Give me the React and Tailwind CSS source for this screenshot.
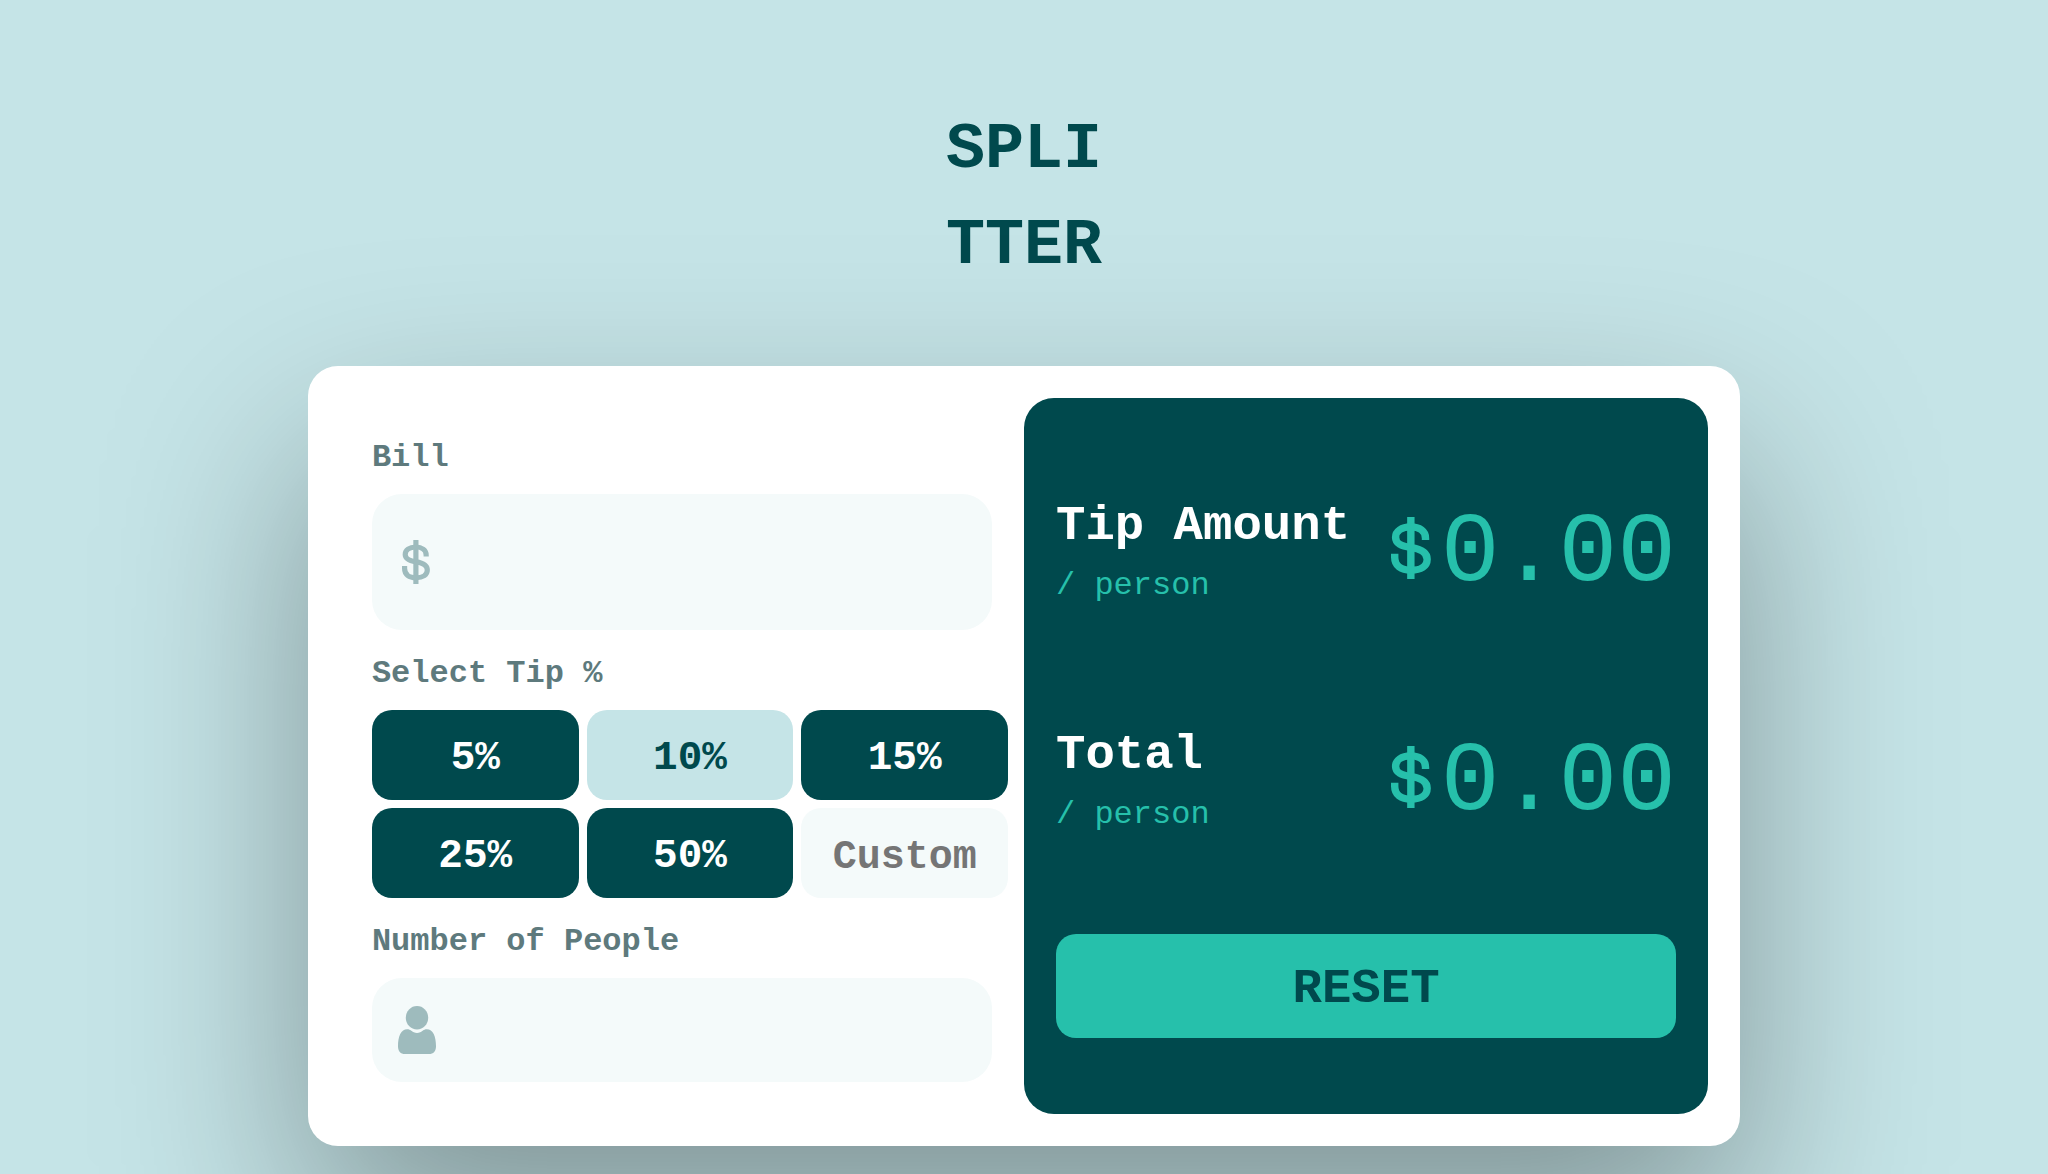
import { useState } from "react";

const TIPS = [5, 10, 15, 25, 50];

function DollarIcon({ className }) {
  return (
    <svg
      viewBox="0 0 27 44"
      preserveAspectRatio="none"
      fill="none"
      stroke="currentColor"
      strokeWidth="5"
      className={className}
      aria-hidden="true"
    >
      <path d="M13.4 0V44" />
      <path d="M23.3 16.4V15C23.3 10 19.3 7 13.2 7C7.2 7 3.1 10 3.1 14.4C3.1 19 6.9 20.7 13.4 21.7C20.4 22.8 24.4 25 24.4 30C24.4 35 20.2 37.8 13.5 37.8C6.8 37.8 2.5 34.8 2.5 28.6V26" />
    </svg>
  );
}

function PersonIcon({ className }) {
  return (
    <svg viewBox="0 0 38 48" fill="currentColor" className={className} aria-hidden="true">
      <ellipse cx="19" cy="11.7" rx="11.2" ry="11.7" />
      <path d="M9.2 23.2C11 23.2 12 23.8 13 24.6C14.8 26.1 16.7 27 19 27C21.3 27 23.2 26.1 25 24.6C26 23.8 27 23.2 28.8 23.2C35 23.2 38 30.5 38 40.2C38 45.2 35.4 48 31 48H7C2.6 48 0 45.2 0 40.2C0 30.5 3 23.2 9.2 23.2Z" />
    </svg>
  );
}

function Result({ title, value }) {
  return (
    <div className="flex h-36 items-center justify-between">
      <div className="pt-4">
        <h2 className="text-[49px] leading-[60px] font-bold text-white">{title}</h2>
        <p className="text-[32px] leading-[60px]">/ person</p>
      </div>
      <div className="flex items-center gap-2.5">
        <DollarIcon className="h-[62px] w-10" />
        <output className="pt-3 text-[98px] leading-[132px]">{value}</output>
      </div>
    </div>
  );
}

const labelClass = "flex h-20 items-center pt-2 text-[32px] leading-10 font-bold text-[#5e7a7d]";
const fieldClass =
  "flex items-center rounded-[30px] bg-[#f4fafa] text-[#9ebbbd] focus-within:ring-4 focus-within:ring-[#26c0ab]";
const inputClass =
  "h-full min-w-0 flex-1 bg-transparent pr-6 text-right text-[49px] font-bold text-[#00494d] outline-none";

export default function App() {
  const [bill, setBill] = useState("");
  const [people, setPeople] = useState("");
  const [custom, setCustom] = useState("");
  const [tip, setTip] = useState(10);

  const rate = (custom === "" ? tip : Number(custom) || 0) / 100;
  const count = Number(people) || 0;
  const amount = Number(bill) || 0;
  const tipEach = count > 0 ? (amount * rate) / count : 0;
  const totalEach = count > 0 ? (amount * (1 + rate)) / count : 0;

  const reset = () => {
    setBill("");
    setPeople("");
    setCustom("");
    setTip(10);
  };

  return (
    <div className="flex min-h-screen flex-col items-center bg-[#c5e4e7] px-px pt-[102px] pb-7 font-['Liberation_Mono',monospace]">
      <h1 className="text-center text-[65px] leading-24 font-bold text-[#00494d]">
        SPLI
        <br />
        TTER
      </h1>
      <main className="mt-18 grid w-[70%] grid-cols-2 rounded-[30px] bg-white p-8 shadow-[0_90px_200px_rgba(0,0,0,0.35)]">
        <form className="py-4 pl-8" onSubmit={(e) => e.preventDefault()}>
          <label htmlFor="bill" className={labelClass}>
            Bill
          </label>
          <div className={`${fieldClass} mr-8 h-[136px]`}>
            <DollarIcon className="mx-[30px] h-11 w-7" />
            <input id="bill" inputMode="decimal" value={bill} onChange={(e) => setBill(e.target.value)} className={inputClass} />
          </div>

          <fieldset>
            <legend className={labelClass}>Select Tip %</legend>
            <div className="mr-4 grid grid-cols-3 gap-2">
              {TIPS.map((t) => (
                <button
                  key={t}
                  type="button"
                  aria-pressed={tip === t}
                  onClick={() => {
                    setTip(t);
                    setCustom("");
                  }}
                  className={`h-[90px] rounded-[20px] pt-2 text-[41px] font-bold ${
                    tip === t ? "bg-[#c5e4e7] text-[#00494d]" : "bg-[#00494d] text-white"
                  }`}
                >
                  {t}%
                </button>
              ))}
              <input
                aria-label="Custom tip percentage"
                placeholder="Custom"
                inputMode="decimal"
                value={custom}
                onChange={(e) => setCustom(e.target.value)}
                className="h-[90px] w-full min-w-0 rounded-[20px] bg-[#f4fafa] pt-2 text-center text-[40px] font-bold text-[#00494d] outline-none placeholder:text-[#757575]"
              />
            </div>
          </fieldset>

          <label htmlFor="people" className={labelClass}>
            Number of People
          </label>
          <div className={`${fieldClass} mr-8 h-[104px]`}>
            <PersonIcon className="mx-[26px] h-12 w-[38px]" />
            <input id="people" inputMode="numeric" value={people} onChange={(e) => setPeople(e.target.value)} className={inputClass} />
          </div>
        </form>

        <section className="flex flex-col justify-between gap-[85px] rounded-[30px] bg-[#00494d] px-8 pt-[78px] pb-[76px] text-[#26c0ab]">
          <Result title="Tip Amount" value={tipEach.toFixed(2)} />
          <Result title="Total" value={totalEach.toFixed(2)} />
          <button
            type="button"
            onClick={reset}
            className="h-[104px] rounded-[20px] bg-[#26c0ab] pt-2 text-[49px] font-bold text-[#00494d]"
          >
            RESET
          </button>
        </section>
      </main>
    </div>
  );
}
